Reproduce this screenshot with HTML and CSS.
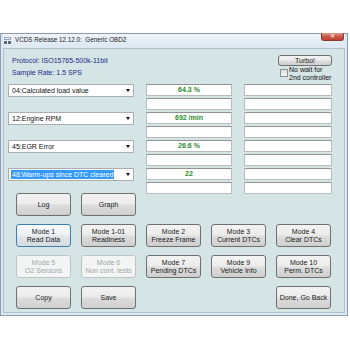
FILE: index.html
```html
<!DOCTYPE html>
<html lang="en">
<head>
  <meta charset="UTF-8" />
  <title>VCDS Release 12.12.0: Generic OBD2</title>
  <link rel="stylesheet" href="styles.css">
</head>
<body>

<div class="window">
  <div class="titlebar">
    <svg class="app-icon" width="7" height="7" viewBox="0 0 7 7">
      <rect x="0" y="0" width="7" height="3" fill="#9aa8b8"/>
      <rect x="1" y="1" width="5" height="1" fill="#e8eef4"/>
      <rect x="0" y="4" width="3" height="3" fill="#5a6a7c"/>
      <rect x="4" y="4" width="3" height="3" fill="#5a6a7c"/>
    </svg>
    <span class="title">VCDS Release 12.12.0:&nbsp; Generic OBD2</span>
    <div class="close">&#x2715;</div>
  </div>

  <div class="client">
    <div class="header">
      <div class="info">
        <div>Protocol: ISO15765-500k-11bit</div>
        <div>Sample Rate: 1.5 SPS</div>
      </div>
      <div class="turbo-box">
        <button class="btn turbo">Turbo!</button>
        <div class="nowait">
          <span class="check"></span>
          <span class="nowait-text">No wait for<br>2nd controller</span>
        </div>
      </div>
    </div>

    <div class="data">
      <div class="combo r1">04:Calculated load value<span class="arrow"></span></div>
      <div class="combo r3">12:Engine RPM<span class="arrow"></span></div>
      <div class="combo r5">45:EGR Error<span class="arrow"></span></div>
      <div class="combo r7"><span class="sel">48:Warm-ups since DTC cleared</span><span class="arrow"></span></div>

      <div class="val c2 r1">64.3 %</div>
      <div class="val c2 r2"></div>
      <div class="val c2 r3">692 /min</div>
      <div class="val c2 r4"></div>
      <div class="val c2 r5">26.6 %</div>
      <div class="val c2 r6"></div>
      <div class="val c2 r7">22</div>
      <div class="val c2 r8"></div>

      <div class="val c3 r1"></div>
      <div class="val c3 r2"></div>
      <div class="val c3 r3"></div>
      <div class="val c3 r4"></div>
      <div class="val c3 r5"></div>
      <div class="val c3 r6"></div>
      <div class="val c3 r7"></div>
      <div class="val c3 r8"></div>
    </div>

    <div class="buttons">
      <button class="btn single">Log</button>
      <button class="btn single">Graph</button>
      <span></span><span></span><span></span>

      <button class="btn focus">Mode 1<br>Read Data</button>
      <button class="btn">Mode 1-01<br>Readiness</button>
      <button class="btn">Mode 2<br>Freeze Frame</button>
      <button class="btn">Mode 3<br>Current DTCs</button>
      <button class="btn">Mode 4<br>Clear DTCs</button>

      <button class="btn" disabled>Mode 5<br>O2 Sensors</button>
      <button class="btn" disabled>Mode 6<br>Non cont. tests</button>
      <button class="btn">Mode 7<br>Pending DTCs</button>
      <button class="btn">Mode 9<br>Vehicle Info</button>
      <button class="btn">Mode 10<br>Perm. DTCs</button>

      <button class="btn single">Copy</button>
      <button class="btn single">Save</button>
      <span></span><span></span>
      <button class="btn single">Done, Go Back</button>
    </div>
  </div>
</div>

</body>
</html>
```

FILE: styles.css
```css
* {
  box-sizing: border-box;
}
body {
  margin: 0;
  background: #fff;
  font-family: "Liberation Sans", Arial, sans-serif;
  font-size: 7px;
  color: #111;
}
.window {
  margin-top: 33px;
  width: 348px;
  height: 283px;
  border: 1px solid #8c9cb0;
  padding: 0 2px 2px 2px;
  background: #dce7f2;
  display: flex;
  flex-direction: column;
}
.titlebar {
  height: 14px;
  display: flex;
  align-items: flex-start;
  background: linear-gradient(#eef3f9, #dce7f2);
}
.app-icon {
  margin: 3px 0 0 1px;
}
.title {
  margin-left: 4px;
  margin-top: 2px;
  font-size: 6.3px;
  line-height: 8px;
  color: #1e1e1e;
}
.close {
  margin-left: auto;
  width: 23px;
  height: 8px;
  margin-right: 1px;
  margin-top: -1px;
  border: 1px solid #8a3a30;
  border-top: none;
  border-radius: 0 0 3px 3px;
  background: linear-gradient(#e49a8c, #c85a48 50%, #c0402e);
  color: #fff;
  font-size: 6px;
  line-height: 7px;
  text-align: center;
}
.client {
  flex: 1;
  background: #d5e4e4;
  border: 1px solid #b0c0cc;
}
.header {
  height: 35px;
  padding: 6px 12px 0 8px;
  display: flex;
  justify-content: space-between;
}
.info {
  line-height: 12px;
  color: #222b8e;
}
.turbo-box {
  width: 54px;
}
.btn {
  display: block;
  width: 100%;
  padding: 0;
  border: 1px solid #707070;
  border-radius: 3px;
  background: linear-gradient(#f3f3f3, #ebebeb 48%, #dddddd 52%, #cfcfcf);
  font-family: "Liberation Sans", Arial, sans-serif;
  font-size: 7px;
  line-height: 8px;
  color: #1a1a1a;
  text-align: center;
}
.turbo {
  height: 11px;
  line-height: 9px;
}
.nowait {
  display: flex;
  padding-left: 2px;
  white-space: nowrap;
}
.check {
  width: 8px;
  height: 8px;
  margin-top: 3px;
  margin-right: 1px;
  border: 1px solid #8e8f8f;
  background: linear-gradient(#dcdcdc, #f6f6f6);
}
.nowait-text {
  line-height: 8px;
}
.data {
  margin-left: 4px;
  display: grid;
  grid-template-columns: 126px 86px 88px;
  grid-auto-rows: 12px;
  column-gap: 12px;
  row-gap: 2px;
}
.r1 { grid-row: 1; }
.r2 { grid-row: 2; }
.r3 { grid-row: 3; }
.r4 { grid-row: 4; }
.r5 { grid-row: 5; }
.r6 { grid-row: 6; }
.r7 { grid-row: 7; }
.r8 { grid-row: 8; }
.c2 { grid-column: 2; }
.c3 { grid-column: 3; }
.combo {
  grid-column: 1;
  height: 13px;
  display: flex;
  align-items: center;
  padding-left: 3px;
  background: #fff;
  border: 1px solid #abadb3;
  white-space: nowrap;
}
.arrow {
  margin-left: auto;
  margin-right: 3px;
  width: 0;
  height: 0;
  border-left: 2.5px solid transparent;
  border-right: 2.5px solid transparent;
  border-top: 3px solid #111;
}
.sel {
  background: #3399ff;
  color: #fff;
  margin-left: -1px;
  padding: 1px 1px;
}
.val {
  background: #fff;
  border: 1px solid #b9bcbc;
  border-top-color: #8f9393;
  text-align: center;
  line-height: 10px;
  font-weight: bold;
  color: #2a8e2a;
}
.buttons {
  margin-left: 12px;
  margin-top: -1px;
  display: grid;
  grid-template-columns: repeat(5, 55px);
  grid-auto-rows: 23px;
  column-gap: 10px;
  row-gap: 8px;
}
.buttons .btn {
  height: 23px;
}
.btn.focus {
  border-color: #3c7fb1;
  background: linear-gradient(#f7f9fb, #eef1f4 48%, #e2e6ea 52%, #d6dbe0);
}
.btn:disabled {
  border-color: #c0c3c5;
  background: #f3f4f4;
  color: #a3a6a8;
}
```
